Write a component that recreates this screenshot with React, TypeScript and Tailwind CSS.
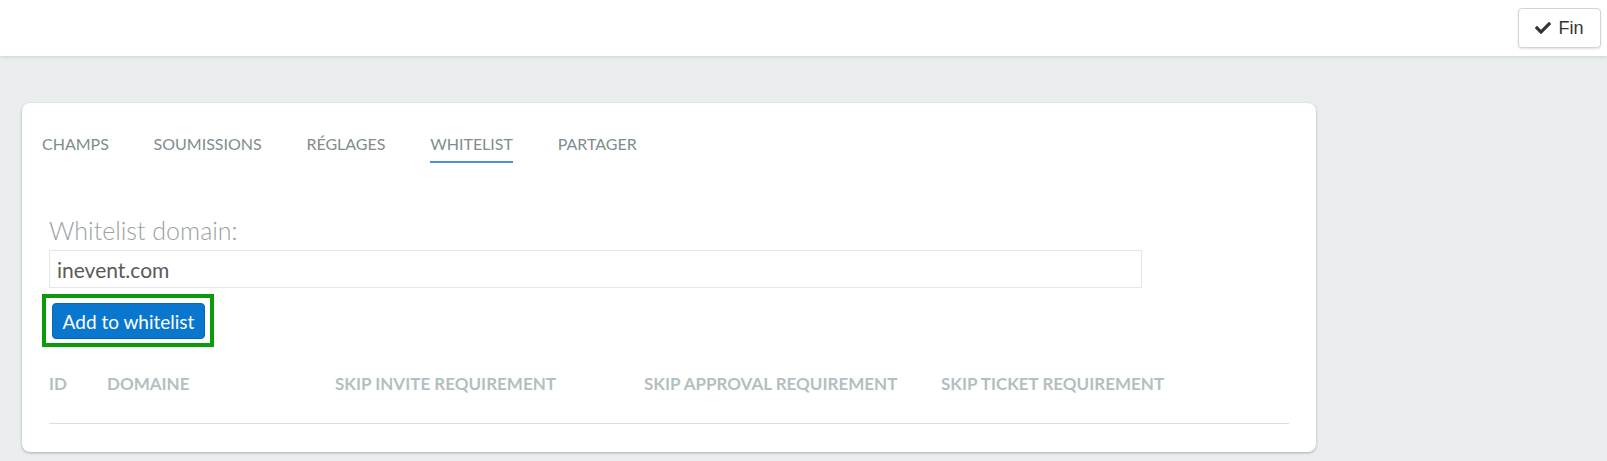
import React from "react";
import { FaCheck } from "react-icons/fa";

const tabs = ["CHAMPS", "SOUMISSIONS", "RÉGLAGES", "WHITELIST", "PARTAGER"];

const columns = [
  { label: "ID", width: "w-[58px]" },
  { label: "DOMAINE", width: "w-[228px]" },
  { label: "SKIP INVITE REQUIREMENT", width: "w-[309px]" },
  { label: "SKIP APPROVAL REQUIREMENT", width: "w-[297px]" },
  { label: "SKIP TICKET REQUIREMENT", width: "flex-1" },
];

const App: React.FC = () => {
  return (
    <div className="min-h-screen w-full bg-[#eaeeee] font-['Lato',sans-serif]">
      {/* Top bar */}
      <div className="h-[56px] bg-white shadow-[0_1px_4px_rgba(0,0,0,0.12)] flex items-center justify-end pr-[6px] relative z-10">
        <button className="h-[40px] w-[83px] bg-white border border-[#d4d4d4] rounded-[4px] shadow-[0_1px_2px_rgba(0,0,0,0.12)] flex items-center justify-center gap-[7px] text-[#333] font-['Liberation_Sans',sans-serif] text-[18px]">
          <FaCheck className="w-[16px] h-[16px]" />
          <span>Fin</span>
        </button>
      </div>

      {/* Content */}
      <div className="pt-[47px] pl-[22px] pb-[9px]">
        <div className="w-[1294px] bg-white rounded-[8px] shadow-[0_1px_3px_rgba(0,0,0,0.28)] pt-[29px] px-[20px] pb-[28px]">
          {/* Tabs */}
          <div className="flex gap-[44.7px]">
            {tabs.map((t) => (
              <div
                key={t}
                className={`text-[16px] leading-[24px] pb-[5px] border-b-2 text-[#808d8e] ${
                  t === "WHITELIST" ? "border-[#4a8fe0]" : "border-transparent"
                }`}
              >
                {t}
              </div>
            ))}
          </div>

          {/* Form */}
          <div className="ml-[7px] mt-[53px]">
            <label className="block text-[25px] leading-[28px] font-light text-[#9aa2a3]">
              Whitelist domain:
            </label>
            <input
              readOnly
              value="inevent.com"
              className="mt-[6px] block w-[1093px] h-[38px] border border-[#e6e8e8] px-[7px] text-[21px] text-[#5a5a5a] outline-none"
            />
            <div className="relative inline-block ml-[3px] mt-[15px]">
              <button className="h-[36px] w-[153px] rounded-[4px] bg-[#0a77cf] border border-[#0867b5] text-white text-[19px] leading-none">
                Add to whitelist
              </button>
              {/* highlight annotation */}
              <div className="absolute left-[-10px] top-[-9px] right-[-9px] bottom-[-8px] border-4 border-[#0a9a0a] pointer-events-none" />
            </div>

            {/* Table header */}
            <div className="mt-[35px] w-[1240px] flex border-b border-[#dcdfe0] pb-[29px]">
              {columns.map((c) => (
                <div
                  key={c.label}
                  className={`${c.width} text-[17px] leading-[20px] font-bold text-[#b3bfc1]`}
                >
                  {c.label}
                </div>
              ))}
            </div>
          </div>
        </div>
      </div>
    </div>
  );
};

export default App;
